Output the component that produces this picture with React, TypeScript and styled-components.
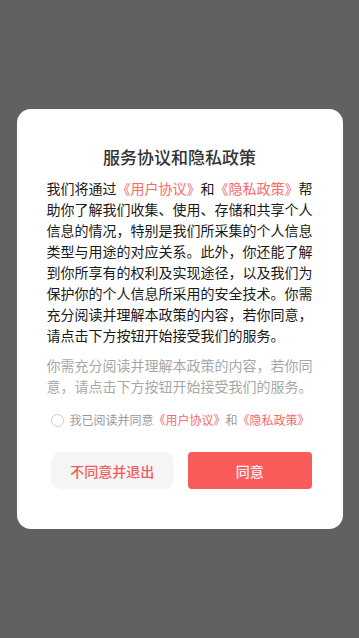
import React, { useState } from 'react';
import styled, { createGlobalStyle } from 'styled-components';

const GlobalStyle = createGlobalStyle`
  html, body {
    margin: 0;
    padding: 0;
    background: #616161;
  }
  body {
    font-family: "Noto Sans CJK SC", "Noto Sans", sans-serif;
  }
`;

const App = () => {
  const [checked, setChecked] = useState(false);

  return (
    <Overlay>
      <GlobalStyle />
      <Dialog>
        <Title>服务协议和隐私政策</Title>
        <Body>
          我们将通过<Link>《用户协议》</Link>和<Link>《隐私政策》</Link>帮助你了解我们收集、使用、存储和共享个人信息的情况，特别是我们所采集的个人信息类型与用途的对应关系。此外，你还能了解到你所享有的权利及实现途径，以及我们为保护你的个人信息所采用的安全技术。你需充分阅读并理解本政策的内容，若你同意，请点击下方按钮开始接受我们的服务。
        </Body>
        <Hint>你需充分阅读并理解本政策的内容，若你同意，请点击下方按钮开始接受我们的服务。</Hint>
        <AgreeRow onClick={() => setChecked(!checked)}>
          <Radio $checked={checked} />
          <AgreeText>
            我已阅读并同意<Link>《用户协议》</Link>和<Link>《隐私政策》</Link>
          </AgreeText>
        </AgreeRow>
        <Buttons>
          <Button $variant="ghost">不同意并退出</Button>
          <Button $variant="primary">同意</Button>
        </Buttons>
      </Dialog>
    </Overlay>
  );
};

const Overlay = styled.div`
  width: 100vw;
  height: 100vh;
  display: flex;
  justify-content: center;
  padding-top: 109px;
  box-sizing: border-box;
`;
const Dialog = styled.div`
  width: 326px;
  height: 420px;
  box-sizing: border-box;
  background: #fff;
  border-radius: 14px;
  padding: 36px 30px 0 30px;
  display: flex;
  flex-direction: column;
`;
const Title = styled.div`
  text-align: center;
  font-size: 17px;
  line-height: 24px;
  font-weight: 500;
  color: #333;
  margin-bottom: 9px;
`;
const Body = styled.p`
  margin: 0;
  font-size: 14px;
  line-height: 21px;
  color: #1a1a1a;
  text-align: justify;
`;
const Link = styled.span`
  color: #f56a6a;
`;
const Hint = styled.p`
  margin: 9px 0 0 0;
  font-size: 14px;
  line-height: 21px;
  color: #a8a8a8;
`;
const AgreeRow = styled.div`
  display: flex;
  align-items: center;
  margin-top: 14px;
  padding-left: 4px;
  cursor: pointer;
`;
const Radio = styled.span<{ $checked: boolean }>`
  width: 11px;
  height: 11px;
  border-radius: 50%;
  border: 1px solid #ccc;
  background: ${(p) => (p.$checked ? '#f75a5a' : '#fff')};
  margin-right: 6px;
  flex-shrink: 0;
`;
const AgreeText = styled.span`
  font-size: 12px;
  line-height: 18px;
  color: #999;
`;
const Buttons = styled.div`
  display: flex;
  gap: 14px;
  padding: 0 1px 0 4px;
  margin-top: 23px;
`;
const Button = styled.button<{ $variant: 'ghost' | 'primary' }>`
  flex: 1;
  height: 37px;
  border: none;
  font-family: inherit;
  font-size: 14px;
  font-weight: 500;
  border-radius: ${(p) => (p.$variant === 'ghost' ? '10px' : '4px')};
  background: ${(p) => (p.$variant === 'ghost' ? '#f5f5f5' : '#f95a5a')};
  color: ${(p) => (p.$variant === 'ghost' ? '#f25c5c' : '#fff1f1')};
`;

export default App;
